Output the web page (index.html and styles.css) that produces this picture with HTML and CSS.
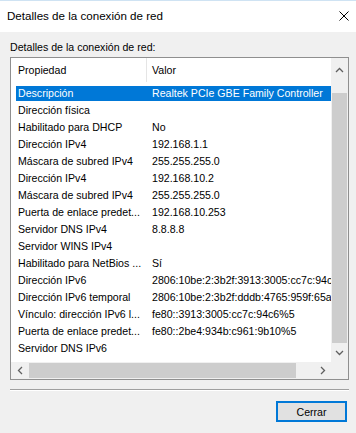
FILE: index.html
```html
<!DOCTYPE html>
<html lang="es">
<head>
  <meta charset="UTF-8" />
  <title>Detalles de la conexión de red</title>
  <link rel="stylesheet" href="styles.css">
</head>
<body>
  <div class="window">
    <div class="titlebar">
      <span class="title">Detalles de la conexión de red</span>
      <svg class="close" width="10" height="10" viewBox="0 0 10 10">
        <path d="M0.5 0.5 L9.5 9.5 M9.5 0.5 L0.5 9.5" stroke="#000" stroke-width="1" fill="none" />
      </svg>
    </div>

    <div class="content">
      <div class="caption">Detalles de la conexión de red:</div>

      <div class="listview">
        <div class="view">
          <div class="header">
            <div class="col1">Propiedad</div>
            <div class="col2">Valor</div>
          </div>
          <div class="rows">
            <div class="row selected"><span class="col1">Descripción</span><span class="col2">Realtek PCIe GBE Family Controller</span></div>
            <div class="row"><span class="col1">Dirección física</span><span class="col2"></span></div>
            <div class="row"><span class="col1">Habilitado para DHCP</span><span class="col2">No</span></div>
            <div class="row"><span class="col1">Dirección IPv4</span><span class="col2">192.168.1.1</span></div>
            <div class="row"><span class="col1">Máscara de subred IPv4</span><span class="col2">255.255.255.0</span></div>
            <div class="row"><span class="col1">Dirección IPv4</span><span class="col2">192.168.10.2</span></div>
            <div class="row"><span class="col1">Máscara de subred IPv4</span><span class="col2">255.255.255.0</span></div>
            <div class="row"><span class="col1">Puerta de enlace predet...</span><span class="col2">192.168.10.253</span></div>
            <div class="row"><span class="col1">Servidor DNS IPv4</span><span class="col2">8.8.8.8</span></div>
            <div class="row"><span class="col1">Servidor WINS IPv4</span><span class="col2"></span></div>
            <div class="row"><span class="col1">Habilitado para NetBios ...</span><span class="col2">Sí</span></div>
            <div class="row"><span class="col1">Dirección IPv6</span><span class="col2">2806:10be:2:3b2f:3913:3005:cc7c:94c6</span></div>
            <div class="row"><span class="col1">Dirección IPv6 temporal</span><span class="col2">2806:10be:2:3b2f:dddb:4765:959f:65a1</span></div>
            <div class="row"><span class="col1">Vínculo: dirección IPv6 l...</span><span class="col2">fe80::3913:3005:cc7c:94c6%5</span></div>
            <div class="row"><span class="col1">Puerta de enlace predet...</span><span class="col2">fe80::2be4:934b:c961:9b10%5</span></div>
            <div class="row"><span class="col1">Servidor DNS IPv6</span><span class="col2"></span></div>
          </div>
        </div>

        <div class="vscroll">
          <div class="arrow arrow-up">
            <svg width="9" height="6" viewBox="0 0 9 6"><polyline points="1,5 4.5,1.5 8,5" /></svg>
          </div>
          <div class="vthumb"></div>
          <div class="arrow arrow-down">
            <svg width="9" height="6" viewBox="0 0 9 6"><polyline points="1,1 4.5,4.5 8,1" /></svg>
          </div>
        </div>

        <div class="hscroll">
          <div class="arrow arrow-left">
            <svg width="6" height="9" viewBox="0 0 6 9"><polyline points="5,1 1.5,4.5 5,8" /></svg>
          </div>
          <div class="hthumb"></div>
          <div class="hspace"></div>
          <div class="arrow arrow-right">
            <svg width="6" height="9" viewBox="0 0 6 9"><polyline points="1,1 4.5,4.5 1,8" /></svg>
          </div>
        </div>

        <div class="corner"></div>
      </div>

      <div class="separator"></div>

      <div class="footer">
        <button class="btn">Cerrar</button>
      </div>
    </div>
  </div>
</body>
</html>
```

FILE: styles.css
```css
* {
  box-sizing: border-box;
}
body {
  margin: 0;
  font-family: "Liberation Sans", Arial, sans-serif;
  font-size: 10.6px;
  color: #000;
  background: #f0f0f0;
}
.window {
  width: 356px;
  height: 433px;
  display: flex;
  flex-direction: column;
}
.titlebar {
  height: 32px;
  border-top: 1px solid #cfe3f3;
  background: #fff;
  display: flex;
  align-items: center;
  justify-content: space-between;
  padding: 0 7px 2px 7px;
}
.title {
  font-size: 11.6px;
}
.close {
  display: block;
}
.content {
  flex: 1;
  padding: 8px 7px 0 10px;
  display: flex;
  flex-direction: column;
}
.caption {
  line-height: 15px;
  margin-bottom: 2px;
  white-space: nowrap;
}
.listview {
  height: 323px;
  border: 1px solid #8f8f8f;
  background: #fff;
  display: grid;
  grid-template-columns: 1fr 17px;
  grid-template-rows: 1fr 17px;
}
.view {
  overflow: hidden;
}
.header {
  height: 24px;
  display: flex;
  line-height: 24px;
}
.header .col1 {
  width: 136px;
  padding-left: 7px;
  border-right: 1px solid #e5e5e5;
}
.header .col2 {
  padding-left: 5px;
}
.rows {
  padding-top: 3px;
}
.row {
  display: flex;
  height: 17px;
  margin-left: 5px;
  line-height: 15px;
  border-top: 1px solid transparent;
  border-bottom: 1px solid transparent;
  background-clip: padding-box;
  white-space: nowrap;
}
.row .col1 {
  width: 131px;
  flex-shrink: 0;
  padding-left: 2px;
  overflow: hidden;
}
.row .col2 {
  padding-left: 5px;
}
.row.selected {
  background-color: #0078d7;
  color: #fff;
}

/* scrollbars */
.arrow {
  display: flex;
  align-items: center;
  justify-content: center;
}
.arrow svg {
  display: block;
  fill: none;
  stroke: #606060;
  stroke-width: 1.3;
}
.vscroll {
  background: #f0f0f0;
  display: flex;
  flex-direction: column;
}
.arrow-up {
  height: 23px;
}
.vthumb {
  margin: 12px 1px 0;
  height: 250px;
  background: #cdcdcd;
}
.arrow-down {
  flex: 1;
}
.hscroll {
  background: #f0f0f0;
  display: flex;
}
.arrow-left,
.arrow-right {
  width: 17px;
}
.hthumb {
  width: 267px;
  margin: 1px 0 1px 1px;
  background: #cdcdcd;
}
.hspace {
  flex: 1;
}
.corner {
  background: #f0f0f0;
}

.separator {
  margin-top: 9px;
  border-top: 1px solid #a0a0a0;
  border-bottom: 1px solid #fff;
}
.footer {
  display: flex;
  justify-content: flex-end;
  padding: 10px 2px 0 0;
}
.btn {
  width: 71px;
  height: 21px;
  padding: 0;
  border: 2px solid #0078d7;
  background: #e1e1e1;
  font-family: inherit;
  font-size: 10.6px;
  color: #000;
}
```
